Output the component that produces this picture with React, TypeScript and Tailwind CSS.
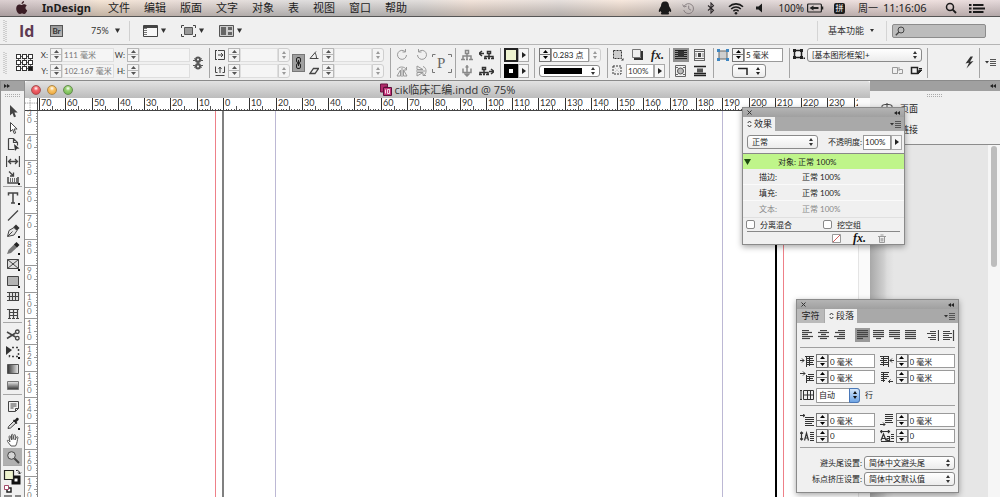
import React, { useEffect, useState } from 'react';

const PX_PER_MM = 2.628;

function useWindowSize() {
  const [size, setSize] = useState({ w: window.innerWidth, h: window.innerHeight });
  useEffect(() => {
    const update = () => setSize({ w: window.innerWidth, h: window.innerHeight });
    window.addEventListener('resize', update);
    return () => window.removeEventListener('resize', update);
  }, []);
  return size;
}

type IconProps = { w?: number; h?: number; children: React.ReactNode; className?: string };

function Icon({ w = 14, h = 14, children, className = '' }: IconProps) {
  return (
    <svg
      width={w}
      height={h}
      viewBox={`0 0 ${w} ${h}`}
      fill="none"
      stroke="currentColor"
      aria-hidden="true"
      className={`shrink-0 ${className}`}
    >
      {children}
    </svg>
  );
}

function Stepper({ name, muted = false }: { name: string; muted?: boolean }) {
  return (
    <span
      className={`flex h-[14px] w-[12px] shrink-0 flex-col border bg-[#f4f4f4] ${
        muted ? 'border-[#b8b8b8] text-[#555]' : 'border-[#777] text-black'
      }`}
    >
      <button type="button" aria-label={`${name} +`} className="flex flex-1 items-center justify-center">
        <Icon w={5} h={3}>
          <path d="M2.5 0 5 3H0z" fill="currentColor" stroke="none" />
        </Icon>
      </button>
      <button
        type="button"
        aria-label={`${name} -`}
        className={`flex flex-1 items-center justify-center border-t ${muted ? 'border-[#b8b8b8]' : 'border-[#777]'}`}
      >
        <Icon w={5} h={3}>
          <path d="M0 0h5L2.5 3z" fill="currentColor" stroke="none" />
        </Icon>
      </button>
    </span>
  );
}

function Field({
  id,
  label,
  value = '',
  className = '',
  muted = false,
}: {
  id: string;
  label: string;
  value?: string;
  className?: string;
  muted?: boolean;
}) {
  return (
    <>
      <Stepper name={label} muted={muted} />
      <input
        id={id}
        aria-label={label}
        defaultValue={value}
        className={`h-[14px] min-w-0 border pl-px outline-none ${
          muted ? 'border-[#dedede] bg-[#f5f5f5] text-[#777]' : 'border-[#9a9a9a] bg-white text-[#222]'
        } ${className}`}
      />
    </>
  );
}

function Arrows({ className = '' }: { className?: string }) {
  return (
    <Icon w={4} h={8} className={className}>
      <path d="M2 0 4 3H0zM0 5h4L2 8z" fill="currentColor" stroke="none" />
    </Icon>
  );
}

function Select({ id, label, value, className = '' }: { id: string; label: string; value: string; className?: string }) {
  return (
    <span className={`relative flex h-[14px] shrink-0 items-center ${className}`}>
      <select
        id={id}
        aria-label={label}
        className="h-full w-full appearance-none rounded-[3px] border border-[#8a8a8a] bg-linear-to-b from-white to-[#ececec] pl-[4px] text-[#222] outline-none"
      >
        <option>{value}</option>
      </select>
      <Arrows className="pointer-events-none absolute right-[5px] text-[#333]" />
    </span>
  );
}

function Spin({ name }: { name: string }) {
  return (
    <button
      type="button"
      aria-label={name}
      className="flex h-[14px] w-[12px] shrink-0 items-center justify-center rounded-r-[3px] border border-[#cfcfcf] bg-[#f4f4f4] text-[#999]"
    >
      <Arrows />
    </button>
  );
}

function MoreArrow({ name, className = '' }: { name: string; className?: string }) {
  return (
    <button
      type="button"
      aria-label={name}
      className={`flex w-[11px] shrink-0 items-center justify-center border border-[#aaa] bg-[#f6f6f6] text-[#222] ${className}`}
    >
      <Icon w={4} h={6}>
        <path d="M0 0v6l4-3z" fill="currentColor" stroke="none" />
      </Icon>
    </button>
  );
}

const Sep = () => <span className="h-[30px] w-px shrink-0 bg-[#a5a5a5]" />;
const Row = ({ children, className = '' }: { children: React.ReactNode; className?: string }) => (
  <div className={`flex h-4 items-center ${className}`}>{children}</div>
);

const Caret = () => (
  <Icon w={5} h={5}>
    <path d="M0 .5h5L2.500 5z" fill="#333" stroke="none" />
  </Icon>
);

const Grip = () => (
  <svg width="4" height="22" className="shrink-0" aria-hidden="true">
    <path d="M1 0v22M3 1v21" stroke="#aaa" strokeDasharray="1 1" />
  </svg>
);

function MenuBar() {
  const menus = ['文件', '编辑', '版面', '文字', '对象', '表', '视图', '窗口', '帮助'];
  return (
    <header className='flex h-[17px] shrink-0 items-center border-b border-[#555] bg-[linear-gradient(to_bottom,rgba(255,255,255,0.35),rgba(110,110,110,0.35)),linear-gradient(to_right,#c9b6b8_0%,#cdbcbc_6%,#f0d8c0_10%,#e0cfc8_18%,#cfcccc_30%,#d2cdca_42%,#ecd6c8_47%,#d9cfca_56%,#f3dccb_62%,#cfc6c6_70%,#dccaca_80%,#ecd4d0_90%,#d8c6c8_100%)] pr-[15px] pl-[15px] text-[11px] text-[#1c1c1c] font-["Noto_Sans","Noto_Sans_CJK_SC",sans-serif]'>
      <Icon w={13} h={14} className="text-[#3a1c24]">
        <path
          d="M6.6 3.9c.9 0 1.6-.6 2.6-.6 1.100 0 2 .6 2.500 1.300-1.900 1.200-1.700 3.900.5 4.800-.6 1.600-1.700 3.500-2.900 3.500-.9 0-1.200-.5-2.300-.5s-1.500.5-2.300.5C3.200 12.900 1.200 10 1.200 7.400c0-2.600 1.600-4 3.200-4 1 0 1.600.5 2.200.5zM6.500 3c0-1.500 1.100-2.700 2.500-2.900C9.200 1.700 8 3 6.500 3z"
          fill="currentColor"
          stroke="none"
        />
      </Icon>
      <nav className="ml-[14px] flex items-center gap-[14px] whitespace-nowrap">
        <a href="#app" className="mr-[3px] font-bold">
          InDesign
        </a>
        {menus.map((m) => (
          <a key={m} href={`#${m}`}>
            {m}
          </a>
        ))}
      </nav>
      <div className="ml-auto flex items-center whitespace-nowrap">
        <Icon w={14} h={14} className="mr-[10px] text-[#1a1a1a]">
          <path
            d="M7 .5C4 .5 3 2.500 3 5L1.300 8C.4 9.800.8 11.300 1.600 11l1-.9c.2.700.5 1.200 1 1.700-1.100.3-1 1.700.4 1.700h6c1.400 0 1.500-1.400.4-1.700.5-.5.8-1 1-1.700l1 .9c.8.300 1.200-1.200.3-3L11 5C11 2.500 10 .5 7 .5z"
            fill="currentColor"
            stroke="none"
          />
        </Icon>
        <Icon w={13} h={13} className="mr-[12px] text-[#8a8284]">
          <path d="M2 4.500A5 5 0 1 1 1.700 8M.6 2.500 2 5l2.600-.8M6.700 3.600v3.200l2.300 1.400" />
        </Icon>
        <Icon w={8} h={12} className="mr-[13px] text-[#2a2628]">
          <path d="M1 3.500 6.500 8.300 4 11V1l2.500 2.700L1 8.500" strokeWidth="1.100" />
        </Icon>
        <Icon w={16} h={13} className="mr-[12px] text-[#1a1a1a]">
          <path d="M1 4.700a10 10 0 0 1 14 0M3.200 7a6.900 6.900 0 0 1 9.600 0M5.400 9.200a3.700 3.700 0 0 1 5.200 0" strokeWidth="1.600" />
          <circle cx="8" cy="11.300" r="1.300" fill="currentColor" stroke="none" />
        </Icon>
        <Icon w={8} h={10} className="mr-[15px] text-[#1a1a1a]">
          <path d="M0 3.500h2.500L6 .5v9L2.500 6.500H0z" fill="currentColor" stroke="none" />
        </Icon>
        <span className="mr-[3px] text-[10px]">100%</span>
        <Icon w={17} h={10} className="mr-[10px] text-[#222]">
          <rect x=".6" y="1" width="13.800" height="8" rx="1" strokeWidth="1.200" />
          <path d="M15.500 3.500v3" strokeWidth="1.500" />
          <path d="M2.500 5 6.500 2.500V4h5v2h-5v1.500z" fill="currentColor" stroke="none" />
        </Icon>
        <span className="mr-[13px] flex size-[11px] items-center justify-center rounded-[2px] bg-[#1c1c1c] text-[8px] leading-none text-white">
          拼
        </span>
        <span className="mr-[5px] text-[10px]">周一</span>
        <time className="mr-[14px] w-[48px] text-[11px]">11:16:06</time>
        <Icon w={12} h={12} className="mr-[12px] text-[#1a1a1a]">
          <circle cx="5" cy="5" r="3.500" strokeWidth="1.500" />
          <path d="m7.700 7.700 3.300 3.300" strokeWidth="1.900" />
        </Icon>
        <Icon w={16} h={11} className="text-[#1a1a1a]">
          <path d="M0 2h2.500M4 2h10.500M0 5.500h2.500M4 5.500h12M0 9h2.500M4 9h10.500" strokeWidth="2" />
        </Icon>
      </div>
    </header>
  );
}

function AppBar() {
  return (
    <div className="flex h-[27px] shrink-0 items-center bg-[#f0f0f0] pr-[14px] pl-[3px]">
      <Grip />
      <span className='ml-[12px] w-[16px] text-[16px] leading-none font-bold text-[#5e3a52] font-["Open_Sans",sans-serif]'>
        Id
      </span>
      <button
        type="button"
        className="ml-[15px] flex h-[12px] w-[13px] items-center justify-center border border-[#555] bg-linear-to-b from-[#999] to-[#b8b8b8] text-[8px] leading-none font-bold text-[#333]"
      >
        Br
      </button>
      <button type="button" className="ml-[28px] flex items-center gap-[6px] text-[9px] text-[#333]">
        75% <Caret />
      </button>
      <span className="ml-[9px] h-[20px] w-px bg-[#d0d0d0]" />
      <button type="button" aria-label="视图选项" className="ml-[13px] flex items-center gap-[3px]">
        <Icon w={15} h={12} className="text-[#444]">
          <path d="M.5.5h14v11H.5z" fill="#f8f8f8" />
          <path d="M1 2h13" strokeWidth="2" />
          <path d="M2.500 3v8" stroke="#777" strokeWidth="3" strokeDasharray="1 1" />
        </Icon>
        <Caret />
      </button>
      <button type="button" aria-label="屏幕模式" className="ml-[15px] flex items-center gap-[3px]">
        <Icon w={15} h={12} className="text-[#444]">
          <path d="M.5 3V.5H3M12 .5h2.500V3M14.500 9v2.500H12M3 11.500H.5V9" />
          <path d="M3.500 2.500h8v7h-8z" fill="#999" stroke="#555" />
        </Icon>
        <Caret />
      </button>
      <button type="button" aria-label="排列文档" className="ml-[15px] flex items-center gap-[3px]">
        <Icon w={15} h={12} className="text-[#555]">
          <path d="M.5.5h14v11H.5z" fill="#ccc" />
          <path d="M2 2h5v8H2zM9 2h4v3H9zM9 7h4v3H9z" fill="#666" stroke="none" />
        </Icon>
        <Caret />
      </button>
      <span className="ml-auto h-[20px] w-px bg-[#d4d4d4]" />
      <button type="button" className="ml-[10px] flex items-center gap-[6px] text-[9px] text-[#333]">
        基本功能
        <Icon w={4} h={3}>
          <path d="M0 0h4L2 3z" fill="#333" stroke="none" />
        </Icon>
      </button>
      <span className="ml-[12px] h-[20px] w-px bg-[#d4d4d4]" />
      <label className="ml-[5px] flex h-[14px] w-[94px] items-center rounded-[2px] border border-[#8c8c8c] bg-[#bcbcbc] px-[2px]">
        <Icon w={10} h={10} className="text-[#444]">
          <circle cx="6" cy="4" r="3" />
          <path d="M3.800 6.200.8 9.200" strokeWidth="1.300" />
        </Icon>
        <input aria-label="搜索" className="w-full min-w-0 bg-transparent outline-none" />
      </label>
    </div>
  );
}

function ControlBar() {
  return (
    <section
      aria-label="控制"
      className="flex h-[36px] shrink-0 items-center overflow-hidden border-t border-[#b5b5b5] bg-[#f0f0f0] pr-[4px] pl-[3px] text-[8px] text-[#333]"
    >
      <Grip />
      <Icon w={17} h={17} className="ml-[9px] text-[#333]">
        <path d="M3 2.500h11M3 8.500h11M3 14.500h11M2.500 3v11M8.500 3v11M14.500 3v11" stroke="#666" />
        {[0, 6, 12].map((y) =>
          [0, 6, 12].map((x) => (
            <rect key={`${x}-${y}`} x={x + 0.5} y={y + 0.5} width="4" height="4" fill={x + y === 24 ? '#111' : '#fff'} />
          )),
        )}
      </Icon>
      <div className="ml-[5px] w-[76px] shrink-0">
        <Row>
          <label htmlFor="pos-x" className="w-[12px] pr-[2px] text-right">X:</label>
          <Field id="pos-x" label="X" value="111 毫米" muted className="w-[52px]" />
        </Row>
        <Row>
          <label htmlFor="pos-y" className="w-[12px] pr-[2px] text-right">Y:</label>
          <Field id="pos-y" label="Y" value="102.167 毫米" muted className="w-[52px]" />
        </Row>
      </div>
      <div className="w-[76px] shrink-0">
        <Row>
          <label htmlFor="size-w" className="w-[13px] pr-[2px] text-right">W:</label>
          <Field id="size-w" label="W" muted className="w-[51px]" />
        </Row>
        <Row>
          <label htmlFor="size-h" className="w-[13px] pr-[2px] text-right">H:</label>
          <Field id="size-h" label="H" muted className="w-[51px]" />
        </Row>
      </div>
      <Icon w={10} h={14} className="mr-[6px] ml-[3px] text-[#555]">
        <rect x="3" y="1.500" width="4" height="4.500" rx="2" strokeWidth="2" />
        <rect x="3" y="8" width="4" height="4.500" rx="2" strokeWidth="2" />
        <path d="M0 4.500h2M8 4.500h2M0 9.500h2M8 9.500h2M1 2.500l1.500 1M9 2.500l-1.500 1M1 11.500l1.500-1M9 11.500l-1.500-1M5 4v6" />
      </Icon>
      <Sep />
      <div className="ml-[5px] w-[75px] shrink-0">
        <Row>
          <Icon w={10} h={10} className="mr-[3px] text-[#444]">
            <path d="M.5 1v8M0 .5h2M0 9.500h2M3 .5h6.500v9H3M3 5h5M6 3l2 2-2 2" />
          </Icon>
          <Field id="scale-x" label="X 缩放" muted className="w-[38px]" />
          <Spin name="X 缩放" />
        </Row>
        <Row>
          <Icon w={10} h={10} className="mr-[3px] text-[#444]">
            <path d="M.5.500v6h2M9.500.5v6h-2M.5 9.500h9M5 1v6M3.500 3 5 1l1.500 2" />
          </Icon>
          <Field id="scale-y" label="Y 缩放" muted className="w-[38px]" />
          <Spin name="Y 缩放" />
        </Row>
      </div>
      <button
        type="button"
        aria-label="约束缩放比例"
        className="ml-[2px] flex h-[18px] w-[13px] shrink-0 items-center justify-center border border-[#777] bg-[#a0a0a0] text-[#222]"
      >
        <Icon w={7} h={12}>
          <rect x="1.500" y=".5" width="4" height="5" rx="1.500" />
          <rect x="1.500" y="6.500" width="4" height="5" rx="1.500" />
          <path d="M3.500 3v6" />
        </Icon>
      </button>
      <div className="ml-[4px] w-[77px] shrink-0">
        <Row>
          <Icon w={10} h={8} className="mr-[3px] text-[#444]">
            <path d="M7 .5 1 7.500h8.500M6 2c1 1.500 1.500 3 1.500 5.500" />
          </Icon>
          <Field id="rotation" label="旋转角度" muted className="w-[38px]" />
          <Spin name="旋转角度" />
        </Row>
        <Row>
          <Icon w={10} h={8} className="mr-[3px] text-[#444]">
            <path d="M4.500 1.500h5L6 6.500H1z" strokeWidth="1.300" />
          </Icon>
          <Field id="shear" label="切变角度" muted className="w-[38px]" />
          <Spin name="切变角度" />
        </Row>
      </div>
      <span className="w-[4px] shrink-0" />
      <Sep />
      <div className="ml-[5px] w-[35px] shrink-0 text-[#999]">
        <Row className="gap-[8px]">
          <Icon w={12} h={12}>
            <path d="M9 2.500A4.500 4.500 0 1 0 10.500 6M9.500 0v3h-3" />
          </Icon>
          <Icon w={12} h={12}>
            <path d="M3 2.500A4.500 4.500 0 1 1 1.500 6M2.500 0v3h3" />
          </Icon>
        </Row>
        <Row className="gap-[8px]">
          <Icon w={12} h={12}>
            <path d="M6 3v9M4.500 5 1 11h3.500zM7.500 5l3.500 6H7.500zM1.500 5c0-4 8-4 9 0M10.500 2v3h-3" />
          </Icon>
          <Icon w={12} h={12}>
            <path d="M0 6h9M1 4.500V1l6 3.500zM1 7.500V11l6-3.500zM7 1.500c4 1 4 8 0 9M10 10.500H7v-3" />
          </Icon>
        </Row>
      </div>
      <Icon w={22} h={22} className="text-[#777]">
        <path d="M1.500 5V2.500h3M17 2.500h3.500V5M20.500 17v3.500H17M4 20.500H1.500V17" />
        <text x="6" y="16" fontSize="15" fill="#666" stroke="none" fontFamily="Liberation Serif, serif">
          P
        </text>
      </Icon>
      <span className="w-[2px] shrink-0" />
      <Sep />
      <div className="ml-[5px] w-[39px] shrink-0">
        <Row className="gap-[6px]">
          <Icon w={12} h={12} className="text-[#888]">
            <path d="M4.500 1.500h3v3h-3zM6 4.500V7M2 10V7h8v3M0 10.500h4M5 10.500h2M8 10.500h4M6 7v3" strokeWidth="1.500" />
          </Icon>
          <Icon w={15} h={12} className="text-[#333]">
            <path d="M8.500 2.500h3v2h-3zM10 5v5M6 9V7.500h8V9M5 9.500h3M9 9.500h2M12 9.500h3M0 4.500h5M3 2 0 4.500 3 7" strokeWidth="1.500" />
          </Icon>
        </Row>
        <Row className="gap-[6px]">
          <Icon w={12} h={12} className="text-[#888]">
            <path d="M6 0v12M2 3.500v4h8v-4M3.500 8.500 6 11l2.500-2.500M4.500 2h3" strokeWidth="1.500" />
          </Icon>
          <Icon w={15} h={12} className="text-[#333]">
            <path d="M3.500 2.500h3v2h-3zM5 5v5M1 9V7.500h8V9M0 9.500h3M4 9.500h2M7 9.500h3M10 6.500h5M12 4l3 2.500L12 9" strokeWidth="1.500" />
          </Icon>
        </Row>
      </div>
      <Sep />
      <div className="ml-[3px] w-[28px] shrink-0">
        <Row>
          <button type="button" aria-label="填色" className="size-[14px] border-2 border-[#222] bg-[#eef3cf]" />
          <MoreArrow name="填色" className="h-[14px]" />
        </Row>
        <Row>
          <button type="button" aria-label="描边" className="flex size-[14px] items-center justify-center bg-black">
            <span className="size-[4px] bg-white" />
          </button>
          <MoreArrow name="描边" className="h-[14px]" />
        </Row>
      </div>
      <span className="w-[2px] shrink-0" />
      <Sep />
      <div className="ml-[4px] w-[68px] shrink-0">
        <Row>
          <Field id="stroke-weight" label="描边粗细" value="0.283 点" className="w-[38px]" />
          <Spin name="描边粗细" />
        </Row>
        <Row>
          <button
            type="button"
            aria-label="描边类型"
            className="flex h-[12px] w-[61px] items-center justify-between rounded-[3px] border border-[#8a8a8a] bg-white pr-[4px] pl-[4px] text-[#333]"
          >
            <span className="h-[6px] w-[38px] bg-black" />
            <Arrows />
          </button>
        </Row>
      </div>
      <Sep />
      <div className="ml-[4px] w-[57px] shrink-0">
        <Row className="gap-[8px]">
          <Icon w={12} h={12} className="text-[#333]">
            <path d="M1.500 1.500h8v8h-8z" strokeDasharray="2 1" fill="#ccc" />
            <path d="M9 11.500h2.500V9z" fill="currentColor" stroke="none" />
          </Icon>
          <Icon w={11} h={11} className="text-[#333]">
            <path d="M2 10h8V2" strokeWidth="2.200" />
            <path d="M.5.500h8v8h-8z" fill="#eee" stroke="#777" />
          </Icon>
          <span className='text-[12px] leading-none font-bold text-[#222] italic font-["Liberation_Serif",serif]'>fx.</span>
        </Row>
        <Row>
          <Icon w={11} h={11} className="mr-[3px] text-[#333]">
            <path d="M1 1h8v8H1z" strokeDasharray="2 1" />
            <path d="m2 2 6 6M8 2 2 8" stroke="#bbb" strokeDasharray="1 1" />
          </Icon>
          <input
            aria-label="不透明度"
            defaultValue="100%"
            className="h-[14px] w-[28px] min-w-0 border border-[#aaa] bg-white pl-px outline-none"
          />
          <MoreArrow name="不透明度" className="h-[14px]" />
        </Row>
      </div>
      <Sep />
      <div className="ml-[3px] w-[40px] shrink-0 text-[#222]">
        <Row className="gap-[5px]">
          <button type="button" aria-label="无文本绕排" className="flex h-[14px] w-[16px] items-center justify-center bg-[#8f8f8f]">
            <Icon w={12} h={11}>
              <path d="M0 1.500h12M0 3.500h12M0 5.500h12M0 7.500h12M0 9.500h12" />
              <path d="M3 2h6v6H3z" fill="#333" stroke="none" />
            </Icon>
          </button>
          <Icon w={11} h={12}>
            <path d="M0 .5h11M0 11.500h11M.5 1v10M10.500 1v10M0 2.500h11M0 9.500h11" stroke="#666" />
            <path d="M4 4h3v4H4z" fill="#444" stroke="none" />
            <path d="M2 4v4M9 4v4" stroke="#888" />
          </Icon>
        </Row>
        <Row className="gap-[8px] pl-[2px]">
          <Icon w={11} h={12}>
            <path d="M.5.500h10v11H.5zM1 2.500h2M8 2.500h2M1 9.500h2M8 9.500h2" stroke="#666" />
            <circle cx="5.500" cy="6" r="3" fill="#bbb" stroke="#555" />
          </Icon>
          <Icon w={12} h={12}>
            <path d="M0 1.500h12M0 10.500h12M0 8.500h12" strokeWidth="1.300" />
            <path d="M3 3.500h6v4H3z" fill="#555" stroke="none" />
          </Icon>
        </Row>
      </div>
      <Sep />
      <div className="ml-[3px] w-[72px] shrink-0">
        <Row>
          <Icon w={12} h={12} className="mr-[3px] text-[#3f86c0]">
            <path d="M2 2h8v8H2z" fill="#cfcfcf" stroke="#666" />
            <path d="M0 0h3v3H0zM9 0h3v3H9zM0 9h3v3H0zM9 9h3v3H9z" fill="currentColor" stroke="none" />
          </Icon>
          <Field id="corner" label="转角大小" value="5 毫米" className="w-[39px]" />
        </Row>
        <Row className="pl-[15px]">
          <button
            type="button"
            aria-label="转角形状"
            className="flex h-[14px] w-[34px] items-center justify-between rounded-[3px] border border-[#8a8a8a] bg-linear-to-b from-white to-[#ececec] px-[5px] text-[#222]"
          >
            <Icon w={10} h={8}>
              <path d="M0 1.500h9V8" strokeWidth="1.500" />
            </Icon>
            <Arrows />
          </button>
        </Row>
      </div>
      <Sep />
      <div className="ml-[3px] w-[134px] shrink-0">
        <Row>
          <Icon w={12} h={11} className="mr-[2px] text-[#222]">
            <path d="M1.500 1.500h7v7h-7z" strokeWidth="1.500" />
            <path d="M0 0h3v3H0zM7 0h3v3H7zM0 7h3v3H0zM7 7h3v3H7zM10.500 8.500h1.500V10h-1.500z" fill="currentColor" stroke="none" />
          </Icon>
          <Select id="object-style" label="对象样式" value="[基本图形框架]+" className="w-[115px]" />
        </Row>
        <Row className="justify-end gap-[6px] pr-[4px]">
          <Icon w={12} h={9} className="text-[#999]">
            <path d="M.5 1.500h5v6h-5zM7 3.500h3.500v4H7M7 1v4" />
          </Icon>
          <Icon w={13} h={9} className="text-[#222]">
            <path d="M1.500 1.500h6v6h-6z" strokeWidth="1.500" />
            <path d="m8 8 1-4h3zM9 2.500h3" fill="currentColor" />
          </Icon>
        </Row>
      </div>
      <Sep />
      <button type="button" aria-label="快速应用" className="ml-auto text-[#333]">
        <Icon w={9} h={13}>
          <path d="M5.500.5.500 7.500 4 6.800 1.500 12.500 8.500 5 5 5.800 8 .5z" fill="currentColor" stroke="none" />
        </Icon>
      </button>
      <span className="mx-[5px]">
        <span className="block h-[30px] w-px bg-[#a5a5a5]" />
      </span>
      <PanelMenu name="控制面板菜单" />
    </section>
  );
}

function PanelMenu({ name }: { name: string }) {
  return (
    <button type="button" aria-label={name} className="text-[#333]">
      <Icon w={11} h={7}>
        <path d="M0 2h4L2 4.500z" fill="currentColor" stroke="none" />
        <path d="M5 .5h6M5 2.500h6M5 4.500h6M5 6.500h6" stroke="#555" />
      </Icon>
    </button>
  );
}

const Corner = () => <path d="M12 12h2v2h-2z" fill="#111" stroke="none" />;

const toolGroups: { name: string; icon: React.ReactNode }[][] = [
  [
    { name: '选择工具', icon: <path d="M4 1v10.500l2.500-2.300 1.500 4 2-.8-1.600-3.800h3.300z" fill="#444" stroke="none" /> },
    { name: '直接选择工具', icon: <path d="M4.500 1.500v9l2.200-2 1.500 4 1.500-.6L8.100 8h3z" fill="#fff" /> },
    {
      name: '页面工具',
      icon: (
        <>
          <path d="M2.500 1.500h5l4 4v3M2.500 1.500v11h6M7.500 1.500v4h4" strokeWidth="1.200" />
          <path d="m8 7 5.500 4.500-2.500.3L9 14z" fill="#333" stroke="none" />
        </>
      ),
    },
    {
      name: '间隙工具',
      icon: <path d="M.5 2v11M13.500 2v11M2.500 7.500h9M5 5 2.500 7.500 5 10M9 5l2.500 2.500L9 10" strokeWidth="1.300" />,
    },
    {
      name: '内容收集器工具',
      icon: (
        <>
          <path d="M2 6v6h10V6" strokeWidth="1.500" />
          <path d="M4 10h7M4 8h7" strokeDasharray="1 1" strokeWidth="1.500" />
          <path d="m3 .5 4 4M7.500 1.500v3.500H4" strokeWidth="1.300" />
          <Corner />
        </>
      ),
    },
  ],
  [
    {
      name: '文字工具',
      icon: (
        <>
          <path d="M2.500 4.500v-2.500h9v2.500M7 2v10M5 12h4" strokeWidth="1.500" />
          <Corner />
        </>
      ),
    },
    { name: '直线工具', icon: <path d="M2 12.500 12 2.500" strokeWidth="1.300" /> },
    {
      name: '钢笔工具',
      icon: (
        <>
          <path d="M1.500 12.500 3 6.500 8 3.500l3 3-3 4.500zM2 12l4.500-4.500" fill="#e4e4e4" />
          <path d="m7.500 3 2.500-2.500 3.500 3.500L11 6.500z" fill="#333" stroke="none" />
          <Corner />
        </>
      ),
    },
    {
      name: '铅笔工具',
      icon: (
        <>
          <path d="m1 13 1.500-4L9 2.500 12 5.500 5 12z" fill="#777" stroke="none" />
          <path d="m8 3.500 2.500-2.500L13.500 4 11 6.500z" fill="#222" stroke="none" />
          <Corner />
        </>
      ),
    },
    {
      name: '矩形框架工具',
      icon: (
        <>
          <path d="M1.500 2.500h11v9h-11zM1.500 2.500l11 9M12.500 2.500l-11 9" fill="#ddd" />
          <Corner />
        </>
      ),
    },
    {
      name: '矩形工具',
      icon: (
        <>
          <path d="M1.500 2.500h11v9h-11z" fill="#b4b4b4" />
          <Corner />
        </>
      ),
    },
    {
      name: '水平网格工具',
      icon: <path d="M1 2.500h12M1 6.500h12M1 10.500h12M3.500 2v8M6.500 2v8M9.500 2v8M12.500 2v8" strokeWidth="1.200" />,
    },
    {
      name: '垂直网格工具',
      icon: <path d="M1 2.500h12M3.500 2v9M7.500 2v9M11.500 2v9M4 5.500h7M4 8.500h7M10 11.500h3M6 11.500h3M2 11.500h3" strokeWidth="1.200" />,
    },
  ],
  [
    {
      name: '剪刀工具',
      icon: (
        <>
          <path d="m1 4 8.500 5M1 10.500 9.500 5" strokeWidth="1.500" />
          <circle cx="11.300" cy="3.800" r="1.800" strokeWidth="1.300" />
          <circle cx="11.300" cy="10.200" r="1.800" strokeWidth="1.300" />
        </>
      ),
    },
    {
      name: '自由变换工具',
      icon: (
        <>
          <path d="M0 1v9l6-5z" fill="#333" stroke="none" />
          <path d="M6 2.500h6.500v9H3.500V9" strokeWidth="1.500" strokeDasharray="2 2" />
          <Corner />
        </>
      ),
    },
    {
      name: '渐变色板工具',
      icon: (
        <>
          <defs>
            <linearGradient id="g1">
              <stop stopColor="#333" />
              <stop offset="1" stopColor="#eee" />
            </linearGradient>
          </defs>
          <path d="M1.500 2.500h11v9h-11z" fill="url(#g1)" stroke="#555" />
        </>
      ),
    },
    {
      name: '渐变羽化工具',
      icon: (
        <>
          <defs>
            <linearGradient id="g2" x2="0" y2="1">
              <stop stopColor="#eee" />
              <stop offset="1" stopColor="#333" />
            </linearGradient>
          </defs>
          <path d="M1.500 2.500h11v8h-11z" fill="url(#g2)" stroke="#777" />
        </>
      ),
    },
  ],
  [
    { name: '附注工具', icon: <path d="M2.500 2.500h10v7l-3 3h-7zM9.500 12V9.500h3M4.500 5h6M4.500 7h6M4.500 9h3" /> },
    {
      name: '吸管工具',
      icon: (
        <>
          <path d="m2 12.500.5-2L8 5l2 2-5.500 5z" fill="#ddd" />
          <path d="M7 4.500 10.500 8l1-1-1-1 2-2c1-1.500-.8-3-2-2L8.800 4 8 3.500z" fill="#222" stroke="none" />
          <Corner />
        </>
      ),
    },
    {
      name: '抓手工具',
      icon: (
        <path
          d="M5 13 1.500 8.500c-.8-1 .5-1.800 1.200-1L4 9 3 3.800c0-1 1.200-1.200 1.500-.2L5.500 7V2c0-1 1.500-1 1.500 0v4.500L8 2.300c.2-1 1.600-.8 1.500.3L9 7l1.500-3c.5-.8 1.700-.3 1.400.6C11 7.500 11.500 10 9.500 13z"
          fill="#fff"
          stroke="#555"
        />
      ),
    },
    {
      name: '缩放显示工具',
      icon: (
        <>
          <circle cx="5.500" cy="5.500" r="3.800" fill="#d5d5d5" stroke="#444" />
          <path d="m8.500 8.500 4.500 4.500" strokeWidth="2" />
        </>
      ),
    },
  ],
];

function Tools() {
  return (
    <aside aria-label="工具" className="flex w-[25px] shrink-0 flex-col border-r border-l border-[#8f8f8f] bg-[#f0f0f0]">
      <div className="flex h-[10px] shrink-0 items-center bg-[#a2a2a2] pl-[3px]">
        <Icon w={6} h={4}>
          <path d="M0 0v4l3-2zM3 0v4l3-2z" fill="#222" stroke="none" />
        </Icon>
      </div>
      <div className="flex h-[12px] shrink-0 items-start justify-center pt-[3px]">
        <svg width="16" height="3" aria-hidden="true">
          <path d="M0 .5h16M0 2.500h16" stroke="#aaa" strokeDasharray="1 1" />
        </svg>
      </div>
      {toolGroups.map((group, i) => (
        <div
          key={i}
          className={`mx-[2px] grid shrink-0 auto-rows-fr border-b border-[#a8a8a8] ${
            ['mb-[3px] h-[84px]', 'mb-[3px] h-[133px]', 'mb-[2px] h-[69px]', 'h-[69px]'][i]
          }`}
        >
          {group.map((t) => (
            <button
              key={t.name}
              type="button"
              aria-label={t.name}
              className={`flex items-center justify-center text-[#444] ${
                t.name === '缩放显示工具' ? 'bg-[#b0b0b0]' : ''
              }`}
            >
              <Icon>{t.icon}</Icon>
            </button>
          ))}
        </div>
      ))}
      <Icon w={23} h={30} className="mt-[2px]">
        <path d="M12 9h6v6h-6z" stroke="#111" strokeWidth="3" fill="#fff" />
        <path d="M3.500 2.500h9v9h-9z" fill="#eef3cf" stroke="#222" strokeWidth="1.200" />
        <path d="M15 2.500c2-.5 3.500.5 3.500 3M17 4.500l1.500 1.500L20 4.500" stroke="#222" />
        <path d="M6 20h4v4H6z" stroke="#222" strokeWidth="1.500" fill="#fff" />
        <path d="M3.500 17.500h4v4h-4z" stroke="#a04868" fill="#fff" />
        <path d="M3 27h8v3H3zM14 27h6v3h-6z" fill="#888" stroke="none" />
      </Icon>
    </aside>
  );
}

function HorizontalRuler() {
  const { w } = useWindowSize();
  const zero = 185;
  const visible = Math.max(0, w - 180);
  const count = Math.floor((visible - zero) / PX_PER_MM) + 71;
  const marks = Array.from({ length: Math.max(0, count) }, (_, i) => i - 70);
  return (
    <svg height="13" className="block w-full min-w-0" aria-hidden="true">
      {marks.map((mm) => {
        const x = Math.round(zero + mm * PX_PER_MM) + 0.5;
        const len = mm % 10 === 0 ? 13 : mm % 5 === 0 ? 5 : 2;
        return <path key={mm} d={`M${x} 13v-${len}`} stroke={mm % 10 === 0 ? '#333' : '#555'} />;
      })}
      <path d={`M0 12.500h${w}`} stroke="#444" />
      {marks
        .filter((mm) => mm % 10 === 0)
        .map((mm) => (
          <text key={mm} x={Math.round(zero + mm * PX_PER_MM) + 2} y="8" fontSize="9" fill="#333" fontFamily="Lato, sans-serif">
            {Math.abs(mm)}
          </text>
        ))}
    </svg>
  );
}

function VerticalRuler() {
  const { h } = useWindowSize();
  const yOf = (mm: number) => Math.round(23 + (mm - 40) * PX_PER_MM);
  const count = Math.floor((h - 118 - 23) / PX_PER_MM) + 9;
  const marks = Array.from({ length: Math.max(0, count + 6) }, (_, i) => i + 31);
  return (
    <svg width="13" className="absolute inset-0 h-full" aria-hidden="true">
      {marks.map((mm) => {
        const y = yOf(mm) + 0.5;
        const len = mm % 10 === 0 ? 13 : mm % 5 === 0 ? 4 : 2;
        return <path key={mm} d={`M13 ${y}h-${len}`} stroke="#999" />;
      })}
      <path d={`M12.500 0v${h}`} stroke="#888" />
      {[30, ...marks.filter((mm) => mm % 10 === 0)].map((mm) => (
        <text key={mm} y={yOf(mm) + 1} fontSize="8" fill="#777" fontFamily="Lato, sans-serif">
          {String(mm)
            .split('')
            .map((d, i) => (
              <tspan key={i} x="2" dy="7">
                {d}
              </tspan>
            ))}
        </text>
      ))}
    </svg>
  );
}

function DocumentWindow() {
  return (
    <main className="flex min-w-0 flex-1 flex-col bg-white">
      <div className="relative flex h-[17px] shrink-0 items-center justify-center gap-[3px] rounded-t-[3px] bg-linear-to-b from-[#e2e2e2] to-[#bcbcbc]">
        <div className="absolute left-[6px] flex gap-[6px]">
          <button type="button" aria-label="关闭" className="size-[10px] rounded-full border border-[#a85050] bg-[radial-gradient(circle_at_50%_30%,#fff_0%,#f0646a_35%,#d63c44_100%)]" />
          <button type="button" aria-label="最小化" className="size-[10px] rounded-full border border-[#b08848] bg-[radial-gradient(circle_at_50%_30%,#fff_0%,#f8c468_35%,#eaa030_100%)]" />
          <button type="button" aria-label="缩放" className="size-[10px] rounded-full border border-[#658c50] bg-[radial-gradient(circle_at_50%_30%,#fff_0%,#96d070_35%,#68b048_100%)]" />
        </div>
        <Icon w={12} h={13}>
          <path d="M.5 1h7v3h-3v5h-4z" fill="#b02a6a" stroke="#6a1440" />
          <path d="M3.500 4.500h8v8h-8z" fill="#c23478" stroke="#5c1038" />
          <path d="M5.500 6.500v4M7.500 6.500v4h2v-4z" stroke="#fff" strokeWidth=".8" />
        </Icon>
        <h1 className='text-[11px] leading-none text-[#333] font-["Open_Sans","Noto_Sans_CJK_SC",sans-serif]'>
          cik临床汇编.indd @ 75%
        </h1>
      </div>
      <div className="flex h-[13px] shrink-0 bg-white">
        <Icon w={13} h={13} className="border-r border-b border-[#444]">
          <path d="M0 5.500h13M5.500 0v13" stroke="#888" strokeDasharray="1 1" />
        </Icon>
        <HorizontalRuler />
        <span className="w-[12px] shrink-0 bg-[#fafafa]" />
      </div>
      <div className="flex min-h-0 flex-1">
        <div className="relative w-[13px] shrink-0 bg-white">
          <VerticalRuler />
        </div>
        <div className="relative min-w-0 flex-1 overflow-hidden bg-white">
          <span className="absolute inset-y-0 left-[177px] w-px bg-[#ee8088]" />
          <span className="absolute inset-y-0 left-[184px] w-[2px] bg-[#808080]" />
          <span className="absolute inset-y-0 left-[237px] w-px bg-[#bcb8d4]" />
          <span className="absolute inset-y-0 left-[684px] w-px bg-[#bcb8d4]" />
          <span className="absolute inset-y-0 left-[737px] w-[2px] bg-black" />
          <span className="absolute inset-y-0 left-[745px] w-px bg-[#ee8088]" />
        </div>
        <div className="w-[12px] shrink-0 border-l border-[#e4e4e4] bg-[#fafafa]" />
      </div>
    </main>
  );
}

function Collapse({ className = '' }: { className?: string }) {
  return (
    <Icon w={6} h={4} className={className}>
      <path d="M3 0v4L0 2zM6 0v4L3 2z" fill="#222" stroke="none" />
    </Icon>
  );
}

function Dock() {
  return (
    <aside className="flex w-[130px] shrink-0 flex-col text-[9px] text-[#222]">
      <div className="flex h-[10px] shrink-0 items-center justify-end bg-[#a0a0a0] pr-[4px]">
        <Collapse />
      </div>
      <div className="flex h-[54px] shrink-0 flex-col border-b border-[#8c8c8c] bg-[#f0f0f0]">
        <svg width="16" height="3" className="mt-[3px] ml-[57px]" aria-hidden="true">
          <path d="M0 .5h16M0 2.500h16" stroke="#aaa" strokeDasharray="1 1" />
        </svg>
        <button type="button" className="mt-[2px] flex h-[20px] items-center gap-[6px] pl-[10px]">
          <Icon w={14} h={12} className="text-[#444]">
            <path d="M7 0v12M2 4.500V2.500C4 1 10 1 12 2.500v2M1 4.500h3.500V12M13 4.500H9.500V12M1 4v7M13 4v7" />
          </Icon>
          页面
        </button>
        <button type="button" className="flex h-[22px] items-center pl-[30px]">
          链接
        </button>
      </div>
      <div className="flex min-h-0 flex-1 bg-[linear-gradient(to_right,#a8a8a8_0px,#cfcfcf_14px,#dcdcdc_17px,#e6e6e6_24px,#e6e6e6_100%)]">
        <div className="ml-auto flex w-[12px] justify-center bg-[#f6f6f6] pt-px">
          <span className="h-[121px] w-[6px] rounded-full bg-[#bdbdbd]" />
        </div>
      </div>
    </aside>
  );
}

const panelFrame =
  'absolute w-[163px] border border-[#8a8a8a] bg-[#f0f0f0] text-[8px] text-[#222] shadow-[0_2px_6px_rgba(0,0,0,0.35)]';

function PanelHeader() {
  return (
    <div className="flex h-[9px] items-center justify-between bg-linear-to-b from-[#b4b4b4] to-[#a0a0a0] pr-[4px] pl-[4px]">
      <button type="button" aria-label="关闭面板">
        <Icon w={5} h={5} className="text-[#333]">
          <path d="m.5.500 4 4M4.500.5l-4 4" />
        </Icon>
      </button>
      <Collapse />
    </div>
  );
}

const Diamond = () => (
  <Icon w={5} h={8}>
    <path d="M.7 3 2.500 1l1.800 2M.7 5l1.800 2 1.800-2" stroke="#333" />
  </Icon>
);

function EffectsPanel() {
  const rows = [
    ['描边:', '正常 100%', 'border-b text-[#222]'],
    ['填充:', '正常 100%', 'border-b text-[#222]'],
    ['文本:', '正常 100%', 'text-[#888]'],
  ];
  return (
    <section aria-label="效果" className={`${panelFrame} top-[107px] right-[95px]`}>
      <PanelHeader />
      <div className="flex h-[14px] items-center bg-[#a9a9a9] pr-[3px]">
        <button type="button" className="flex h-full w-[32px] items-center gap-[2px] bg-[#f0f0f0] pl-[4px] text-[9px] whitespace-nowrap">
          <Diamond />
          效果
        </button>
        <span className="ml-auto flex">
          <PanelMenu name="效果面板菜单" />
        </span>
      </div>
      <div className="flex h-[22px] items-center pl-[4px]">
        <Select id="blend" label="混合模式" value="正常" className="w-[71px]" />
        <label htmlFor="opacity" className="ml-auto pr-px whitespace-nowrap">
          不透明度:
        </label>
        <input id="opacity" defaultValue="100%" className="h-[15px] w-[28px] border border-[#999] bg-white pl-px outline-none" />
        <MoreArrow name="不透明度" className="mr-[2px] h-[15px]" />
      </div>
      <div className="flex h-4 items-center border-t border-[#888] bg-[#bff58a]">
        <Icon w={8} h={6} className="ml-px">
          <path d="M0 0h7L3.500 6z" fill="#1c4a10" stroke="none" />
        </Icon>
        <span className="ml-[26px]">对象: 正常 100%</span>
      </div>
      {rows.map(([k, v, tone]) => (
        <div key={k} className={`flex h-4 items-center border-[#fafafa] pl-[16px] ${tone}`}>
          <span className="w-[43px]">{k}</span>
          <span>{v}</span>
        </div>
      ))}
      <div className="flex h-[14px] items-center border-t border-[#e0e0e0]">
        <label className="ml-[3px] flex w-[77px] items-center gap-[5px]">
          <input type="checkbox" className="size-[9px] appearance-none rounded-[2px] border border-[#888] bg-white" />
          分离混合
        </label>
        <label className="flex items-center gap-[5px]">
          <input type="checkbox" className="size-[9px] appearance-none rounded-[2px] border border-[#888] bg-white" />
          挖空组
        </label>
      </div>
      <div className="mx-[4px] flex h-[13px] items-center justify-end gap-[12px] border-t border-[#888] pr-[14px]">
        <Icon w={9} h={9}>
          <path d="M.5.500h8v8h-8z" fill="#fff" stroke="#999" />
          <path d="m1 8 7-7" stroke="#d06060" />
        </Icon>
        <span className='text-[12px] leading-none font-bold text-[#111] italic font-["Liberation_Serif",serif]'>fx.</span>
        <Icon w={8} h={9} className="text-[#999]">
          <path d="M0 2.500h8M2.500 1h3M1.500 3v5.500h5V3M3.200 4v3.500M4.800 4v3.500" />
        </Icon>
      </div>
    </section>
  );
}

function AlignIcon({ lines }: { lines: [number, number][] }) {
  return (
    <Icon w={11} h={10} className="text-[#444]">
      {lines.map(([a, b], i) => (
        <path key={i} d={`M${a} ${i * 2 + 0.5}H${b}`} strokeWidth="1.200" />
      ))}
    </Icon>
  );
}

const alignments: { name: string; lines: [number, number][]; gap: string }[] = [
  { name: '左对齐', lines: [[0, 7], [0, 10], [0, 6], [0, 11], [0, 8]], gap: '' },
  { name: '居中对齐', lines: [[2, 9], [0, 11], [3, 8], [0, 11], [2, 9]], gap: 'ml-px' },
  { name: '右对齐', lines: [[4, 11], [1, 11], [5, 11], [0, 11], [3, 11]], gap: 'ml-px' },
  { name: '双齐末行齐左', lines: [[0, 11], [0, 11], [0, 11], [0, 11], [0, 6]], gap: 'ml-[8px] bg-[#999]' },
  { name: '双齐末行居中', lines: [[0, 11], [0, 11], [0, 11], [0, 11], [3, 8]], gap: 'ml-px' },
  { name: '双齐末行齐右', lines: [[0, 11], [0, 11], [0, 11], [0, 11], [5, 11]], gap: 'ml-px' },
  { name: '全部强制双齐', lines: [[0, 11], [0, 11], [0, 11], [0, 11], [0, 11]], gap: 'ml-px' },
];

const paraIcons = {
  left: 'M5 1.500h9M6 3.500h7M6 5.500h8M6 7.500h7M6 9.500h8M6.500 1v11M9.500 1v10M0 5.500h4M2 3.500 4 5.500l-2 2',
  right: 'M0 1.500h8M1 3.500h7M0 5.500h7M1 7.500h7M0 9.500h8M3.500 1v10M8.500 1v11M14 5.500h-4M12 3.500l-2 2 2 2',
  first: 'M8 3.500h6M6 5.500h8M6 7.500h7M6 9.500h8M6.500 4v8M9.500 5v5M0 2.500h5M3 .5l2 2-2 2',
  last: 'M1 1.500h8M1 3.500h7M1 5.500h8M1 7.500h6M1 9.500h4M3.500 1v10M13 10.500H8.500M10.500 8.500l-2 2 2 2',
  before: 'M5 3.500h9M5 5.500h9M5 7.500h9M5 9.500h7M5 11.500h9M0 1.500h5M3 0l2 1.500L3 3',
  after: 'M5 .5h8M5 2.500h8M5 4.500h8M5 6.500h7M5 8.500h8M0 10.500h5M3 8.500l2 2-2 2',
};

function ParaField({ id, label, value, icon }: { id: string; label: string; value: string; icon: React.ReactNode }) {
  return (
    <div className="flex h-[14px] items-center">
      <span className="flex w-[16px] shrink-0 text-[#333]">
        <Icon w={14} h={12}>
          {icon}
        </Icon>
      </span>
      <Field id={id} label={label} value={value} className="w-[47px]" />
    </div>
  );
}

function ParagraphPanel() {
  const grid = 'mx-[3px] grid grid-cols-2 gap-x-[4px] gap-y-[2px] border-t border-[#a0a0a0]';
  return (
    <section aria-label="段落" className={`${panelFrame} top-[299px] right-[41px]`}>
      <PanelHeader />
      <div className="flex h-[14px] items-center bg-[#a9a9a9] pr-[3px] text-[9px]">
        <button type="button" className="flex h-full w-[27px] items-center justify-center bg-[#bababa] whitespace-nowrap">
          字符
        </button>
        <button type="button" className="ml-px flex h-full w-[32px] items-center gap-[2px] bg-[#f0f0f0] pl-[4px] whitespace-nowrap">
          <Diamond />
          段落
        </button>
        <span className="ml-auto flex">
          <PanelMenu name="段落面板菜单" />
        </span>
      </div>
      <div className="flex h-[24px] items-center pl-[3px]">
        {alignments.map((a) => (
          <button key={a.name} type="button" aria-label={a.name} className={`flex h-[14px] w-[15px] items-center justify-center ${a.gap}`}>
            <AlignIcon lines={a.lines} />
          </button>
        ))}
        <button type="button" aria-label="朝向书脊对齐" className="ml-[9px] text-[#444]">
          <Icon w={12} h={11}>
            <path d="M3 1.500h6M0 3.500h9M4 5.500h5M1 7.500h8M3 9.500h6M11.500 0v11" strokeWidth="1.200" />
          </Icon>
        </button>
        <button type="button" aria-label="背向书脊对齐" className="ml-[4px] text-[#444]">
          <Icon w={12} h={11}>
            <path d="M0 1.500h7M0 3.500h9M0 5.500h6M0 7.500h9M0 9.500h7M10.500 0v11" strokeWidth="1.200" />
          </Icon>
        </button>
      </div>
      <div className={`${grid} h-[58px] content-start pt-[6px]`}>
        <ParaField id="indent-left" label="左缩进" value="0 毫米" icon={<path d={paraIcons.left} />} />
        <ParaField id="indent-right" label="右缩进" value="0 毫米" icon={<path d={paraIcons.right} />} />
        <ParaField id="indent-first" label="首行左缩进" value="0 毫米" icon={<path d={paraIcons.first} />} />
        <ParaField id="indent-last" label="末行右缩进" value="0 毫米" icon={<path d={paraIcons.last} />} />
        <div className="col-span-2 flex h-[18px] items-center">
          <Icon w={14} h={12} className="mr-[2px] text-[#333]">
            <path d="M3.500 1.500h10v9h-10zM3.500 6h10M7.500 1.500v9M10.500 1.500v9M1 1v10M0 1.500h2M0 10.500h2" />
          </Icon>
          <span className="relative flex h-[15px] w-[44px]">
            <select
              aria-label="强制行数"
              className="h-full w-full appearance-none rounded-r-[3px] border border-[#999] bg-white pl-[2px] outline-none"
            >
              <option>自动</option>
            </select>
            <span className="pointer-events-none absolute inset-y-0 right-0 flex w-[11px] items-center justify-center rounded-r-[3px] border border-[#4a78b8] bg-linear-to-b from-[#d4e6fa] to-[#6ea4e4]">
              <Arrows className="text-[#111]" />
            </span>
          </span>
          <span className="ml-[5px]">行</span>
        </div>
      </div>
      <div className={`${grid} h-[42px] content-start pt-[7px]`}>
        <ParaField id="space-before" label="段前间距" value="0 毫米" icon={<path d={paraIcons.before} />} />
        <ParaField id="space-after" label="段后间距" value="0 毫米" icon={<path d={paraIcons.after} />} />
        <ParaField
          id="drop-lines"
          label="首字下沉行数"
          value="0"
          icon={
            <path
              d="M1.500 2v8M0 3.500 1.500 2 3 3.500M0 8.500 1.500 10 3 8.500M4.500 10.500 6.500 3l2 7.500M5 8h3M10 2.500h4M10 4.500h4M10 6.500h4M10 8.500h4M10 10.500h4"
              strokeWidth="1.200"
            />
          }
        />
        <ParaField
          id="drop-chars"
          label="首字下沉字数"
          value="0"
          icon={
            <path
              d="M1 1.500h8M2 0 .5 1.500 2 3M8 0l1.500 1.500L8 3M1 10.500 3.500 4 6 10.500M2 8.500h3M7 6.500h2.500v4H7v-2h2M11 4.500h3M11 6.500h3M11 8.500h3M1 11.500h13"
              strokeWidth="1.200"
            />
          }
        />
      </div>
      <div className="mx-[3px] grid h-[45px] grid-cols-[1fr_91px] content-start items-center gap-x-[2px] gap-y-[2px] border-t border-[#a0a0a0] pt-[8px]">
        <label htmlFor="kinsoku" className="text-right whitespace-nowrap">
          避头尾设置:
        </label>
        <Select id="kinsoku" label="避头尾设置" value="简体中文避头尾" />
        <label htmlFor="mojikumi" className="text-right whitespace-nowrap">
          标点挤压设置:
        </label>
        <Select id="mojikumi" label="标点挤压设置" value="简体中文默认值" />
      </div>
    </section>
  );
}

export default function App() {
  return (
    <div className='relative flex h-screen flex-col overflow-hidden bg-[#e6e6e6] leading-normal font-[Lato,"Noto_Sans_CJK_SC",sans-serif]'>
      <MenuBar />
      <AppBar />
      <ControlBar />
      <div className="flex min-h-0 flex-1 overflow-hidden border-t border-[#8a8a8a]">
        <Tools />
        <DocumentWindow />
        <Dock />
      </div>
      <EffectsPanel />
      <ParagraphPanel />
    </div>
  );
}
